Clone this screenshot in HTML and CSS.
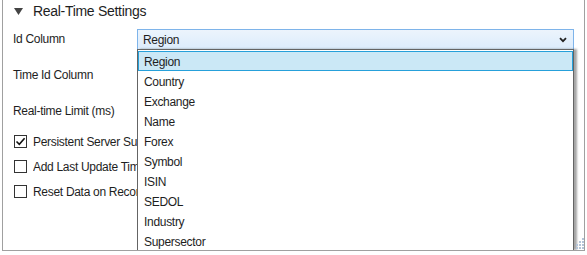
FILE: index.html
```html
<!DOCTYPE html>
<html>
<head>
<meta charset="utf-8">
<link rel="stylesheet" href="styles.css">
</head>
<body>
<div class="panel">
  <div class="header">
    <svg class="tri" width="9" height="7" viewBox="0 0 9 7"><path d="M0 0H9L4.5 7Z" fill="#444"/></svg>
    <span class="title">Real-Time Settings</span>
  </div>
  <div class="form">
    <div class="label">Id Column</div>
    <div class="combo">
      <span>Region</span>
      <svg class="chev" width="8" height="6" viewBox="0 0 8 6"><path d="M1 1.2L4 4.2L7 1.2" fill="none" stroke="#222" stroke-width="1.8"/></svg>
    </div>
    <div class="label">Time Id Column</div>
    <div class="field"></div>
    <div class="label">Real-time Limit (ms)</div>
    <div class="field"></div>
  </div>
  <div class="checks">
    <div class="check">
      <span class="box"><svg width="11" height="11" viewBox="0 0 11 11"><path d="M1.5 5.5L4.3 8.3L9.6 2.2" fill="none" stroke="#111" stroke-width="1.6"/></svg></span>
      <span class="ctext">Persistent Server Subscription</span>
    </div>
    <div class="check">
      <span class="box"></span>
      <span class="ctext">Add Last Update Time</span>
    </div>
    <div class="check">
      <span class="box"></span>
      <span class="ctext">Reset Data on Reconnect</span>
    </div>
  </div>
  <div class="dropdown">
    <div class="item selected">Region</div>
    <div class="item">Country</div>
    <div class="item">Exchange</div>
    <div class="item">Name</div>
    <div class="item">Forex</div>
    <div class="item">Symbol</div>
    <div class="item">ISIN</div>
    <div class="item">SEDOL</div>
    <div class="item">Industry</div>
    <div class="item">Supersector</div>
  </div>
  <svg class="grip" width="8" height="11" viewBox="0 0 8 11">
    <g fill="#b4c4d8">
      <rect x="6" y="0" width="2" height="2"/>
      <rect x="6" y="3" width="2" height="2"/>
      <rect x="3" y="3" width="2" height="2"/>
      <rect x="6" y="6" width="2" height="2"/>
      <rect x="3" y="6" width="2" height="2"/>
      <rect x="0" y="6" width="2" height="2"/>
      <rect x="6" y="9" width="2" height="2"/>
      <rect x="3" y="9" width="2" height="2"/>
      <rect x="0" y="9" width="2" height="2"/>
    </g>
  </svg>
</div>
</body>
</html>
```

FILE: styles.css
```css
html, body {
  margin: 0;
  padding: 0;
  background: #ffffff;
}
body {
  font-family: "Segoe UI", "Liberation Sans", Arial, sans-serif;
  font-size: 12px;
  letter-spacing: -0.3px;
  color: #1e1e1e;
  overflow: hidden;
}
.panel {
  position: relative;
  margin-left: 2px;
  width: 581px;
  height: 250px;
  border: 1px solid #a0a0a0;
  border-top: none;
  overflow: hidden;
}
.header {
  height: 22px;
  display: flex;
  align-items: center;
  padding-left: 11px;
}
.tri {
  margin-top: 1px;
}
.title {
  margin-left: 10px;
  font-size: 14px;
  color: #1e1e1e;
}
.form {
  margin-top: 7px;
  padding-left: 10px;
  padding-right: 10px;
  display: grid;
  grid-template-columns: 124px 1fr;
  grid-auto-rows: 21px;
  row-gap: 15px;
  align-items: center;
}
.label {
  line-height: 21px;
}
.combo {
  height: 19px;
  border: 1px solid #7eb4ea;
  background: linear-gradient(#ecf4fc, #dcecfc);
  display: flex;
  align-items: center;
  justify-content: space-between;
  padding: 0 5px 0 5px;
}
.chev {
  margin-right: 1px;
}
.field {
  height: 21px;
}
.checks {
  margin-top: 7px;
  padding-left: 11px;
}
.check {
  width: 123px;
  height: 25px;
  display: flex;
  align-items: center;
  white-space: nowrap;
  overflow: hidden;
}
.box {
  flex: none;
  width: 11px;
  height: 11px;
  border: 1px solid #333;
  background: #fff;
  margin-right: 6px;
  display: flex;
  align-items: center;
  justify-content: center;
}
.ctext {
  overflow: hidden;
}
.dropdown {
  position: absolute;
  left: 134px;
  top: 49px;
  bottom: 0;
  width: 435px;
  border: 1px solid #646464;
  border-bottom: none;
  background: #fff;
  padding-top: 1px;
  box-shadow: 3px 0 2px rgba(0, 0, 0, 0.35);
}
.item {
  height: 20px;
  line-height: 20px;
  padding-left: 5px;
  border: 1px solid transparent;
  box-sizing: border-box;
  color: #1e1e1e;
}
.item.selected {
  background: #cbe8f6;
  border-color: #26a0da;
}
.grip {
  position: absolute;
  left: 573px;
  top: 238px;
}
```
